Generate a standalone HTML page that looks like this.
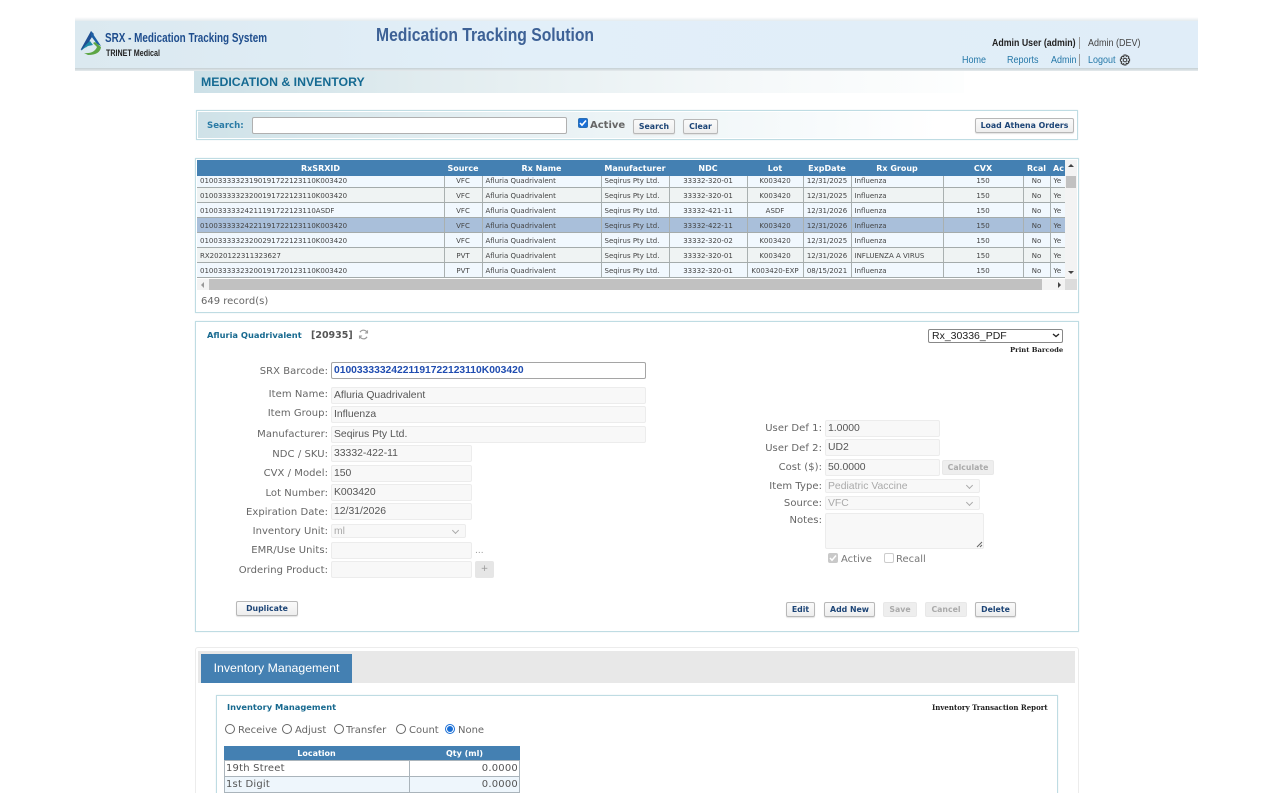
<!DOCTYPE html>
<html><head><meta charset="utf-8"><title>Medication &amp; Inventory</title>
<style>
html,body{margin:0;padding:0;width:1280px;height:800px;overflow:hidden;background:#fff}
body{position:relative;font-family:"DejaVu Sans",sans-serif;color:#555}
.a{position:absolute;white-space:nowrap}
.panel{position:absolute;border:1px solid #bfdce3;background:#fff;box-sizing:border-box;box-shadow:0 0 1px #d5e6ea}
.l{position:absolute;white-space:nowrap;font-size:10px;color:#666;text-align:right;line-height:14px;margin-top:1px;letter-spacing:.05px}
.i{position:absolute;box-sizing:border-box;height:17px;background:#f8f8f8;border:1px solid #ececec;border-radius:2px;font:10.4px/16px "Liberation Sans",sans-serif;color:#555;padding-left:2px;white-space:nowrap}
.s{color:#aaa}
.s:after{content:"";position:absolute;right:7px;top:3px;width:4px;height:4px;border-right:1px solid #aaa;border-bottom:1px solid #aaa;transform:rotate(45deg)}
.b{position:absolute;box-sizing:border-box;height:15px;border:1px solid #b8b8b8;border-radius:2px;background:linear-gradient(#fafafa,#eeeeee);font:bold 7.8px/13px "DejaVu Sans",sans-serif;color:#1d4577;text-align:center;white-space:nowrap;box-shadow:0 1px 1px #e2e2e2}
.d{background:#eeeeee;border-color:#e8e8e8;color:#aaa;box-shadow:none}
.grid{position:absolute;left:197px;top:176px;width:868px;height:103px;overflow:hidden}
table{border-collapse:collapse;table-layout:fixed}
.grid table{position:absolute;left:0;top:-3px;width:868px}
.grid td{height:11px;padding:3px 3px 0;font-size:7px;line-height:11px;color:#444;border-bottom:1px solid #a4abab;border-right:1px solid #a9b0b0;white-space:nowrap;overflow:hidden;box-sizing:content-box}
.grid td:last-child{border-right:0}
.grid td.c{text-align:center}
.grid tr:nth-child(odd) td{background:#f1f8fe}
.grid tr:nth-child(even) td{background:#eff3f3}
.grid tr.sel td{background:#a9bfda}
.h{position:absolute;top:160px;height:16px;background:#4480b2;color:#fff;font:bold 8px/17px "DejaVu Sans",sans-serif;text-align:center;white-space:nowrap;overflow:hidden}
.inv td{font-size:10px;color:#555;border:1px solid #aab4bb;padding:1px 1px 0;height:14px;line-height:14px;letter-spacing:.2px}
.r{position:absolute;width:10px;height:10px;box-sizing:border-box;border:1px solid #666;border-radius:50%;background:#fff}
.n{font:10px/13px 'Liberation Sans',sans-serif;transform:scaleX(.9);transform-origin:0 0}
</style></head><body>

<!-- header -->
<div class="a" style="left:75px;top:17px;width:1123px;height:4px;background:linear-gradient(#fff,#e3ebee)"></div>
<div class="a" style="left:75px;top:21px;width:1123px;height:47px;background:linear-gradient(90deg,#dbe9f0,#e2eff9 40%,#e0edf8)"></div>
<div class="a" style="left:75px;top:68px;width:1123px;height:3px;background:linear-gradient(#c4cfd4,#e6ebed)"></div>

<svg class="a" style="left:80px;top:30px" width="24" height="26" viewBox="0 0 24 26">
<path d="M11 1 L1 19 Q0 21 3 19 L8 14 L6 19 L10 10 L14 4 Z" fill="#1f4f92"/>
<path d="M11 1 L21 16 L17 14 L11 6 Z" fill="#1c5fa5"/>
<path d="M1 21 Q6 14 10 11 L13 15 L8 16 Q4 18 1 21Z" fill="#1d8aa8"/>
<path d="M4 23 Q14 24 17 17 L13 13 L15 12 L21 17 Q20 25 8 25 Z" fill="#5ca644"/>
</svg>
<svg class="a" style="left:104px;top:28px;overflow:visible" width="480" height="30">
<text x="1" y="14" font-family="Liberation Sans" font-weight="bold" font-size="13" fill="#1e4d8d" textLength="162" lengthAdjust="spacingAndGlyphs">SRX - Medication Tracking System</text>
<text x="2" y="28" font-family="Liberation Sans" font-weight="bold" font-size="9" fill="#222" textLength="54" lengthAdjust="spacingAndGlyphs">TRINET Medical</text>
<text x="272" y="13" font-family="Liberation Sans" font-weight="bold" font-size="18.5" fill="#3d6196" textLength="218" lengthAdjust="spacingAndGlyphs">Medication Tracking Solution</text>
</svg>

<div class="a n" style="left:992px;top:37px;font-weight:bold;color:#222;transform:scaleX(.88)">Admin User (admin)</div>
<div class="a" style="left:1079px;top:37px;width:1px;height:12px;background:#999"></div>
<div class="a n" style="left:1088px;top:37px;color:#444">Admin (DEV)</div>
<div class="a n" style="left:962px;top:54px;color:#2478a8">Home</div>
<div class="a n" style="left:1007px;top:54px;color:#2478a8">Reports</div>
<div class="a n" style="left:1051px;top:54px;color:#2478a8">Admin</div>
<div class="a" style="left:1079px;top:54px;width:1px;height:12px;background:#999"></div>
<div class="a n" style="left:1088px;top:54px;color:#2478a8">Logout</div>
<svg class="a" style="left:1119px;top:54px" width="12" height="12" viewBox="0 0 12 12" fill="none" stroke="#333" stroke-width="1"><circle cx="6" cy="6" r="1.8"/><path d="M5 1h2l.3 1.4 1.2-.7 1.4 1.4-.7 1.2L10.6 5v2l-1.4.3.7 1.2-1.4 1.4-1.2-.7L7 11H5l-.3-1.3-1.2.7-1.4-1.4.7-1.2L1.4 7V5l1.4-.3-.7-1.2 1.4-1.4 1.2.7z"/></svg>

<!-- title band -->
<div class="a" style="left:194px;top:71px;width:770px;height:22px;background:linear-gradient(90deg,#cce0e7,#e1ecef 30%,#f6f9fa 75%,#fdfefe)"></div>
<div class="a" style="left:201px;top:74px;font:bold 12.3px/16px 'Liberation Sans',sans-serif;color:#156a92">MEDICATION &amp; INVENTORY</div>

<!-- search panel -->
<div class="panel" style="left:196px;top:110px;width:882px;height:30px"></div>
<div class="a" style="left:198px;top:112px;width:740px;height:26px;background:linear-gradient(90deg,#cfe2e8,#e6f0f3 40%,#f8fbfc 85%,#fff)"></div>
<div class="a" style="left:207px;top:120px;font:bold 8.6px/13px 'DejaVu Sans',sans-serif;color:#2a7ba5">Search:</div>
<div class="a" style="left:252px;top:117px;width:315px;height:17px;box-sizing:border-box;background:#fff;border:1px solid #b0b0b0;border-radius:2px"></div>
<div class="a" style="left:578px;top:118px;width:10px;height:10px;background:#1a6fd6;border-radius:2px;border:1px solid #2a6fb5;box-sizing:border-box"></div>
<svg class="a" style="left:578px;top:118px" width="10" height="10"><path d="M2 5l2 2.2L8 2.5" fill="none" stroke="#fff" stroke-width="1.6"/></svg>
<div class="a" style="left:590px;top:119px;font:bold 10px/14px 'DejaVu Sans',sans-serif;color:#666">Active</div>
<div class="b" style="left:633px;top:119px;width:42px">Search</div>
<div class="b" style="left:683px;top:119px;width:35px">Clear</div>
<div class="b" style="left:975px;top:118px;width:99px">Load Athena Orders</div>

<!-- grid panel -->
<div class="panel" style="left:195px;top:158px;width:884px;height:155px"></div>
<div class="h" style="left:197px;width:247px">RxSRXID</div>
<div class="h" style="left:444px;width:38px">Source</div>
<div class="h" style="left:482px;width:119px">Rx Name</div>
<div class="h" style="left:601px;width:68px">Manufacturer</div>
<div class="h" style="left:669px;width:78px">NDC</div>
<div class="h" style="left:747px;width:56px">Lot</div>
<div class="h" style="left:803px;width:48px">ExpDate</div>
<div class="h" style="left:851px;width:92px">Rx Group</div>
<div class="h" style="left:943px;width:80px">CVX</div>
<div class="h" style="left:1023px;width:27px">Rcal</div>
<div class="h" style="left:1050px;width:15px;text-align:left;padding-left:3px;box-sizing:border-box">Ac</div>

<div class="grid"><table>
<colgroup><col style="width:247px"><col style="width:38px"><col style="width:119px"><col style="width:68px"><col style="width:78px"><col style="width:56px"><col style="width:48px"><col style="width:92px"><col style="width:80px"><col style="width:27px"><col style="width:15px"></colgroup>
<tr><td>01003333323190191722123110K003420</td><td class="c">VFC</td><td>Afluria Quadrivalent</td><td>Seqirus Pty Ltd.</td><td class="c">33332-320-01</td><td class="c">K003420</td><td class="c">12/31/2025</td><td>Influenza</td><td class="c">150</td><td class="c">No</td><td>Ye</td></tr>
<tr><td>01003333323200191722123110K003420</td><td class="c">VFC</td><td>Afluria Quadrivalent</td><td>Seqirus Pty Ltd.</td><td class="c">33332-320-01</td><td class="c">K003420</td><td class="c">12/31/2025</td><td>Influenza</td><td class="c">150</td><td class="c">No</td><td>Ye</td></tr>
<tr><td>01003333324211191722123110ASDF</td><td class="c">VFC</td><td>Afluria Quadrivalent</td><td>Seqirus Pty Ltd.</td><td class="c">33332-421-11</td><td class="c">ASDF</td><td class="c">12/31/2026</td><td>Influenza</td><td class="c">150</td><td class="c">No</td><td>Ye</td></tr>
<tr class="sel"><td>01003333324221191722123110K003420</td><td class="c">VFC</td><td>Afluria Quadrivalent</td><td>Seqirus Pty Ltd.</td><td class="c">33332-422-11</td><td class="c">K003420</td><td class="c">12/31/2026</td><td>Influenza</td><td class="c">150</td><td class="c">No</td><td>Ye</td></tr>
<tr><td>01003333323200291722123110K003420</td><td class="c">VFC</td><td>Afluria Quadrivalent</td><td>Seqirus Pty Ltd.</td><td class="c">33332-320-02</td><td class="c">K003420</td><td class="c">12/31/2025</td><td>Influenza</td><td class="c">150</td><td class="c">No</td><td>Ye</td></tr>
<tr><td>RX2020122311323627</td><td class="c">PVT</td><td>Afluria Quadrivalent</td><td>Seqirus Pty Ltd.</td><td class="c">33332-320-01</td><td class="c">K003420</td><td class="c">12/31/2026</td><td>INFLUENZA A VIRUS</td><td class="c">150</td><td class="c">No</td><td>Ye</td></tr>
<tr><td>01003333323200191720123110K003420</td><td class="c">PVT</td><td>Afluria Quadrivalent</td><td>Seqirus Pty Ltd.</td><td class="c">33332-320-01</td><td class="c">K003420-EXP</td><td class="c">08/15/2021</td><td>Influenza</td><td class="c">150</td><td class="c">No</td><td>Ye</td></tr>
</table></div>

<!-- scrollbars -->
<div class="a" style="left:1065px;top:160px;width:12px;height:119px;background:#f3f3f3"></div>
<div class="a" style="left:1066px;top:176px;width:10px;height:12px;background:#c1c1c1"></div>
<div class="a" style="left:1068px;top:164px;width:0;height:0;border:3px solid transparent;border-bottom:3px solid #444;border-top:0"></div>
<div class="a" style="left:1068px;top:271px;width:0;height:0;border:3px solid transparent;border-top:3px solid #444;border-bottom:0"></div>
<div class="a" style="left:197px;top:279px;width:880px;height:11px;background:#f3f3f3"></div>
<div class="a" style="left:209px;top:279px;width:833px;height:11px;background:#c1c1c1"></div>
<div class="a" style="left:1065px;top:279px;width:12px;height:11px;background:#dcdcdc"></div>
<div class="a" style="left:201px;top:282px;width:0;height:0;border:3px solid transparent;border-right:3px solid #999;border-left:0"></div>
<div class="a" style="left:1058px;top:282px;width:0;height:0;border:3px solid transparent;border-left:3px solid #444;border-right:0"></div>
<div class="a" style="left:201px;top:295px;font:10px/14px 'DejaVu Sans',sans-serif;color:#666">649 record(s)</div>

<!-- form panel -->
<div class="panel" style="left:195px;top:321px;width:884px;height:311px"></div>
<div class="a" style="left:207px;top:329px;font:bold 8.3px/13px 'DejaVu Sans',sans-serif;color:#17698f">Afluria Quadrivalent</div>
<div class="a" style="left:311px;top:329px;font:bold 9.5px/14px 'DejaVu Sans',sans-serif;color:#555">[20935]</div>
<svg class="a" style="left:358px;top:329px" width="11" height="11" viewBox="0 0 11 11" fill="none" stroke="#999" stroke-width="1.2"><path d="M9.3 4A4 4 0 0 0 2 3.2M1.7 7A4 4 0 0 0 9 7.8"/><path d="M9.6 1.2V4H6.9M1.4 9.8V7h2.7" stroke-width=".9"/></svg>

<div class="a" style="left:928px;top:329px;width:135px;height:14px;box-sizing:border-box;border:1px solid #888;border-radius:2px;background:#fff;font:10.5px/13px 'Liberation Sans',sans-serif;color:#222;padding-left:3px">Rx_30336_PDF</div>
<svg class="a" style="left:1052px;top:333px" width="8" height="5"><path d="M1 1l3 2.5L7 1" fill="none" stroke="#222" stroke-width="1.3"/></svg>
<div class="a" style="left:1010px;top:345px;font:bold 6.8px/10px 'DejaVu Serif','Liberation Serif',serif;color:#222">Print Barcode</div>

<div class="l" style="right:952px;top:364px">SRX Barcode:</div>
<div class="i" style="left:331px;top:362px;width:315px;background:#fff;border-color:#a5a5a5;font-weight:bold;font-size:10.3px;color:#1f4cb0">01003333324221191722123110K003420</div>
<div class="l" style="right:952px;top:387px">Item Name:</div>
<div class="i" style="left:331px;top:387px;width:315px">Afluria Quadrivalent</div>
<div class="l" style="right:952px;top:406px">Item Group:</div>
<div class="i" style="left:331px;top:406px;width:315px">Influenza</div>
<div class="l" style="right:952px;top:427px">Manufacturer:</div>
<div class="i" style="left:331px;top:426px;width:315px">Seqirus Pty Ltd.</div>
<div class="l" style="right:952px;top:447px">NDC / SKU:</div>
<div class="i" style="left:331px;top:445px;width:141px">33332-422-11</div>
<div class="l" style="right:952px;top:466px">CVX / Model:</div>
<div class="i" style="left:331px;top:465px;width:141px">150</div>
<div class="l" style="right:952px;top:486px">Lot Number:</div>
<div class="i" style="left:331px;top:484px;width:141px">K003420</div>
<div class="l" style="right:952px;top:505px">Expiration Date:</div>
<div class="i" style="left:331px;top:503px;width:141px">12/31/2026</div>
<div class="l" style="right:952px;top:524px">Inventory Unit:</div>
<div class="i s" style="left:331px;top:524px;width:135px;height:14px;line-height:13px">ml</div>
<div class="l" style="right:952px;top:543px">EMR/Use Units:</div>
<div class="i" style="left:331px;top:542px;width:141px"></div>
<div class="a" style="left:475px;top:545px;font:9px/12px 'DejaVu Sans',sans-serif;color:#999">...</div>
<div class="l" style="right:952px;top:563px">Ordering Product:</div>
<div class="i" style="left:331px;top:561px;width:141px"></div>
<div class="a" style="left:475px;top:561px;width:19px;height:17px;background:#e6e6e6;border-radius:2px;text-align:center;font:9px/16px 'DejaVu Sans',sans-serif;color:#999">+</div>

<div class="l" style="right:458px;top:421px">User Def 1:</div>
<div class="i" style="left:825px;top:420px;width:115px">1.0000</div>
<div class="l" style="right:458px;top:441px">User Def 2:</div>
<div class="i" style="left:825px;top:439px;width:115px">UD2</div>
<div class="l" style="right:458px;top:460px">Cost ($):</div>
<div class="i" style="left:825px;top:459px;width:115px">50.0000</div>
<div class="b d" style="left:942px;top:460px;width:52px">Calculate</div>
<div class="l" style="right:458px;top:479px">Item Type:</div>
<div class="i s" style="left:825px;top:479px;width:155px;height:14px;line-height:13px">Pediatric Vaccine</div>
<div class="l" style="right:458px;top:496px">Source:</div>
<div class="i s" style="left:825px;top:496px;width:155px;height:14px;line-height:13px">VFC</div>
<div class="l" style="right:458px;top:513px">Notes:</div>
<div class="i" style="left:825px;top:513px;width:159px;height:36px"></div>
<svg class="a" style="left:976px;top:541px" width="7" height="7"><path d="M1 6l5-5M4 6l2-2" stroke="#666" stroke-width="1"/></svg>
<div class="a" style="left:828px;top:553px;width:10px;height:10px;background:#c9c9c9;border-radius:2px"></div>
<svg class="a" style="left:828px;top:553px" width="10" height="10"><path d="M2 5l2 2.2L8 2.5" fill="none" stroke="#fff" stroke-width="1.5"/></svg>
<div class="a" style="left:841px;top:553px;font:10px/14px 'DejaVu Sans',sans-serif;color:#777">Active</div>
<div class="a" style="left:884px;top:553px;width:10px;height:10px;box-sizing:border-box;background:#fff;border:1px solid #ccc;border-radius:2px"></div>
<div class="a" style="left:896px;top:553px;font:10px/14px 'DejaVu Sans',sans-serif;color:#777">Recall</div>

<div class="b" style="left:236px;top:601px;width:62px">Duplicate</div>
<div class="b" style="left:786px;top:602px;width:29px">Edit</div>
<div class="b" style="left:824px;top:602px;width:51px">Add New</div>
<div class="b d" style="left:883px;top:602px;width:34px">Save</div>
<div class="b d" style="left:925px;top:602px;width:42px">Cancel</div>
<div class="b" style="left:975px;top:602px;width:41px">Delete</div>

<!-- inventory section -->
<div class="a" style="left:195px;top:647px;width:884px;height:160px;box-sizing:border-box;border:1px solid #ececec;border-radius:3px"></div>
<div class="a" style="left:198px;top:651px;width:877px;height:32px;background:#e8e8e8"></div>
<div class="a" style="left:201px;top:654px;width:151px;height:29px;background:#4480b2;color:#fff;font:12.3px/28px 'Liberation Sans',sans-serif;text-align:center">Inventory Management</div>
<div class="panel" style="left:216px;top:695px;width:842px;height:120px"></div>
<div class="a" style="left:227px;top:701px;font:bold 8.3px/13px 'DejaVu Sans',sans-serif;color:#17698f">Inventory Management</div>
<div class="a" style="left:932px;top:703px;font:bold 7px/10px 'DejaVu Serif','Liberation Serif',serif;color:#222">Inventory Transaction Report</div>

<div class="r" style="left:225px;top:724px"></div>
<div class="a" style="left:238px;top:724px;font:10px/14px 'DejaVu Sans',sans-serif;color:#666">Receive</div>
<div class="r" style="left:282px;top:724px"></div>
<div class="a" style="left:295px;top:724px;font:10px/14px 'DejaVu Sans',sans-serif;color:#666">Adjust</div>
<div class="r" style="left:334px;top:724px"></div>
<div class="a" style="left:346px;top:724px;font:10px/14px 'DejaVu Sans',sans-serif;color:#666">Transfer</div>
<div class="r" style="left:396px;top:724px"></div>
<div class="a" style="left:409px;top:724px;font:10px/14px 'DejaVu Sans',sans-serif;color:#666">Count</div>
<div class="r" style="left:445px;top:724px;border-color:#1a6fd6"></div>
<div class="a" style="left:447px;top:726px;width:6px;height:6px;border-radius:50%;background:#1a6fd6"></div>
<div class="a" style="left:458px;top:724px;font:10px/14px 'DejaVu Sans',sans-serif;color:#666">None</div>

<div class="h" style="left:224px;top:746px;width:185px;height:14px;line-height:15px">Location</div>
<div class="h" style="left:409px;top:746px;width:111px;height:14px;line-height:15px">Qty (ml)</div>
<table class="inv" style="position:absolute;left:224px;top:760px;width:295px">
<colgroup><col style="width:185px"><col style="width:110px"></colgroup>
<tr><td>19th Street</td><td style="text-align:right">0.0000</td></tr>
<tr style="background:#eef6fc"><td>1st Digit</td><td style="text-align:right">0.0000</td></tr>
<tr><td>&nbsp;</td><td>&nbsp;</td></tr>
</table>

<div class="a" style="left:0;top:793px;width:1280px;height:7px;background:#fff"></div>
</body></html>
